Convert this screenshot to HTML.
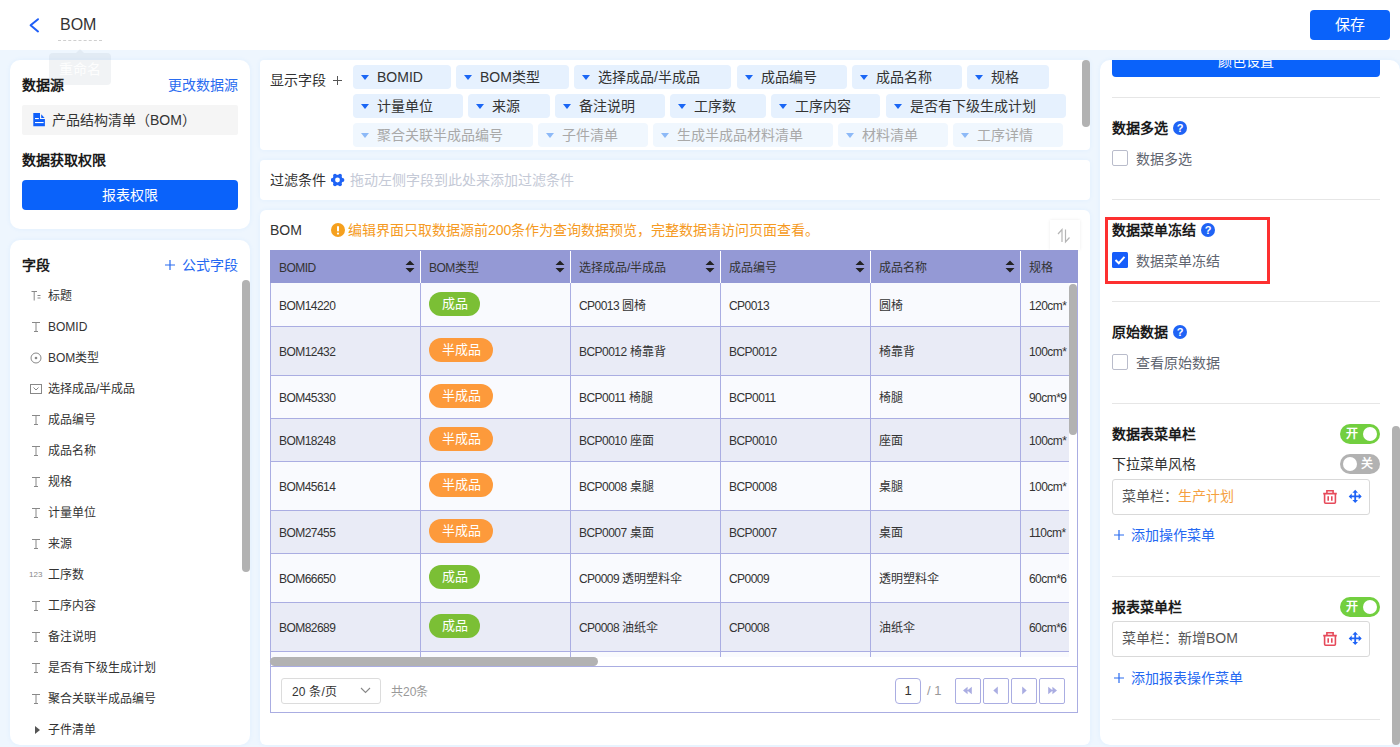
<!DOCTYPE html><html lang="zh-CN"><head><meta charset="utf-8"><style>
*{box-sizing:border-box;margin:0;padding:0}
html,body{width:1400px;height:747px;overflow:hidden}
body{font-family:"Liberation Sans",sans-serif;background:#eef6fe;color:#333;position:relative;font-size:14px}
.abs{position:absolute}
.panel{position:absolute;background:#fff;border-radius:10px;overflow:hidden;box-shadow:0 0 5px rgba(40,140,255,.07)}
.b{font-weight:bold;color:#1a1a1a}
.t{position:absolute;white-space:nowrap;line-height:20px}
.chip{position:absolute;height:24px;background:#e6f1fe;border-radius:4px;line-height:23px;white-space:nowrap;color:#333}
.chip i{position:absolute;left:8px;top:9.5px;width:0;height:0;border-left:4.5px solid transparent;border-right:4.5px solid transparent;border-top:5px solid #1a66f5}
.chip span{position:absolute;left:24px;top:1px}
.chip.f{background:#f0f7fe;color:#a9a9a9}
.chip.f i{border-top-color:#8db9f7}
.fl{position:absolute;left:48px;font-size:12px;line-height:16px;color:#333;white-space:nowrap}
.ic{position:absolute;left:30px}
.cell{position:absolute;font-size:12px;white-space:nowrap;color:#333}
.l{letter-spacing:-0.55px}
.tag{position:absolute;left:429px;height:24px;border-radius:12px;color:#fff;font-size:13px;font-weight:500;line-height:24px;text-align:center}
.g{background:#7bbf35;width:51px}
.o{background:#fd9a3b;width:64px}
.sep{position:absolute;left:1112px;width:268px;height:1px;background:#e6e6e6}
.q{position:absolute;width:14px;height:14px;border-radius:7px;background:#1f63f5;color:#fff;font-size:11px;font-weight:bold;line-height:14px;text-align:center}
.cb{position:absolute;left:1112px;width:16px;height:16px;border:1px solid #b9bccb;border-radius:2px;background:#fff}
.lbl{position:absolute;left:1136px;color:#5f6570;white-space:nowrap;line-height:20px;margin-top:1px}
.tg{position:absolute;left:1340px;width:40px;height:20px;border-radius:10px;color:#fff;font-size:12px;font-weight:bold;line-height:20px}
.tg b{position:absolute;top:3px;width:14px;height:14px;border-radius:7px;background:#fff}
.mbox{position:absolute;left:1112px;width:258px;height:36px;border:1px solid #d9d9d9;border-radius:3px}
.nb{position:absolute;top:678px;width:26px;height:26px;border:1px solid #aaade2;border-radius:2px;background:#fff}
</style></head><body>
<div class="abs" style="left:0;top:0;width:1400px;height:50px;background:#fff"></div>
<svg class="abs" style="left:28px;top:17px" width="13" height="17" viewBox="0 0 13 17"><path d="M10 2.2 L2.6 8.2 L10 14.4" fill="none" stroke="#1f5ef7" stroke-width="2" stroke-linecap="round" stroke-linejoin="round"/></svg>
<div class="t" style="left:60px;top:15px;font-size:16px;color:#333">BOM</div>
<div class="abs" style="left:58px;top:40px;width:44px;border-top:1px dashed #cfcfcf"></div>
<div class="abs" style="left:1310px;top:10px;width:80px;height:30px;background:#0a62fa;border-radius:4px;color:#fff;font-size:15px;line-height:30px;text-align:center">保存</div>
<div class="panel" style="left:10px;top:60px;width:240px;height:169px"></div>
<div class="t b" style="left:22px;top:75px">数据源</div>
<div class="t" style="left:168px;top:75px;color:#2a6cf0">更改数据源</div>
<div class="abs" style="left:22px;top:105px;width:216px;height:30px;background:#f5f5f5;border-radius:2px"></div>
<svg class="abs" style="left:33px;top:113px" width="12" height="14" viewBox="0 0 12 14"><path d="M0.3 0H7V6H11.9V13.2H0.3Z" fill="#1060fa"/><path d="M8.2 1.2L11.6 5H8.2Z" fill="#1060fa"/><rect x="2" y="5" width="3.8" height="1.1" fill="#fff"/><rect x="2" y="9" width="8.6" height="1.1" fill="#fff"/></svg>
<div class="t" style="left:52px;top:110px;color:#333">产品结构清单（BOM）</div>
<div class="t b" style="left:22px;top:150px">数据获取权限</div>
<div class="abs" style="left:22px;top:180px;width:216px;height:30px;background:#0a62fa;border-radius:4px;color:#fff;line-height:30px;text-align:center">报表权限</div>
<div class="abs" style="left:49px;top:53px;width:62px;height:32px;background:rgba(150,160,175,.13);border-radius:4px;color:rgba(255,255,255,.9);font-size:14px;line-height:32px;text-align:center">重命名</div>
<div class="abs" style="left:76px;top:49px;width:0;height:0;border-left:4px solid transparent;border-right:4px solid transparent;border-bottom:4px solid rgba(150,160,175,.13)"></div>
<div class="panel" style="left:10px;top:240px;width:240px;height:505px"></div>
<div class="t b" style="left:22px;top:255px">字段</div>
<svg class="abs" style="left:165px;top:260px" width="10" height="10" viewBox="0 0 10 10"><path d="M0 5H10M5 0V10" stroke="#2a6cf0" stroke-width="1.2"/></svg>
<div class="t" style="left:182px;top:255px;color:#2468f2">公式字段</div>
<div class="abs" style="left:242px;top:280px;width:8px;height:292px;background:#b2b2b2;border-radius:4px"></div>
<div class="fl" style="top:288px">标题</div>
<svg class="ic" style="top:290px" width="12" height="12" viewBox="0 0 12 12"><path d="M1.5 1.5H7M4.2 1.5V10.5M7.5 5.5H10.5M7.5 8H10.5" stroke="#888" stroke-width="1" fill="none"/></svg>
<div class="fl" style="top:319px">BOMID</div>
<svg class="ic" style="top:321px" width="12" height="12" viewBox="0 0 12 12"><path d="M2 1.5H10M6 1.5V10.5M4 10.5H8" stroke="#888" stroke-width="1" fill="none"/></svg>
<div class="fl" style="top:350px">BOM类型</div>
<svg class="ic" style="top:352px" width="12" height="12" viewBox="0 0 12 12"><circle cx="6" cy="6" r="5" stroke="#888" stroke-width="1" fill="none"/><circle cx="6" cy="6" r="1.3" fill="#888"/></svg>
<div class="fl" style="top:381px">选择成品/半成品</div>
<svg class="ic" style="top:383px" width="12" height="12" viewBox="0 0 12 12"><rect x="0.5" y="1.5" width="11" height="9" stroke="#888" stroke-width="1" fill="none"/><path d="M3.5 4.5L6 7L8.5 4.5" stroke="#888" stroke-width="1" fill="none"/></svg>
<div class="fl" style="top:412px">成品编号</div>
<svg class="ic" style="top:414px" width="12" height="12" viewBox="0 0 12 12"><path d="M2 1.5H10M6 1.5V10.5M4 10.5H8" stroke="#888" stroke-width="1" fill="none"/></svg>
<div class="fl" style="top:443px">成品名称</div>
<svg class="ic" style="top:445px" width="12" height="12" viewBox="0 0 12 12"><path d="M2 1.5H10M6 1.5V10.5M4 10.5H8" stroke="#888" stroke-width="1" fill="none"/></svg>
<div class="fl" style="top:474px">规格</div>
<svg class="ic" style="top:476px" width="12" height="12" viewBox="0 0 12 12"><path d="M2 1.5H10M6 1.5V10.5M4 10.5H8" stroke="#888" stroke-width="1" fill="none"/></svg>
<div class="fl" style="top:505px">计量单位</div>
<svg class="ic" style="top:507px" width="12" height="12" viewBox="0 0 12 12"><path d="M2 1.5H10M6 1.5V10.5M4 10.5H8" stroke="#888" stroke-width="1" fill="none"/></svg>
<div class="fl" style="top:536px">来源</div>
<svg class="ic" style="top:538px" width="12" height="12" viewBox="0 0 12 12"><path d="M2 1.5H10M6 1.5V10.5M4 10.5H8" stroke="#888" stroke-width="1" fill="none"/></svg>
<div class="fl" style="top:567px">工序数</div>
<div class="abs" style="left:29px;top:570px;font-size:8px;line-height:10px;color:#888">123</div>
<div class="fl" style="top:598px">工序内容</div>
<svg class="ic" style="top:600px" width="12" height="12" viewBox="0 0 12 12"><path d="M2 1.5H10M6 1.5V10.5M4 10.5H8" stroke="#888" stroke-width="1" fill="none"/></svg>
<div class="fl" style="top:629px">备注说明</div>
<svg class="ic" style="top:631px" width="12" height="12" viewBox="0 0 12 12"><path d="M2 1.5H10M6 1.5V10.5M4 10.5H8" stroke="#888" stroke-width="1" fill="none"/></svg>
<div class="fl" style="top:660px">是否有下级生成计划</div>
<svg class="ic" style="top:662px" width="12" height="12" viewBox="0 0 12 12"><path d="M2 1.5H10M6 1.5V10.5M4 10.5H8" stroke="#888" stroke-width="1" fill="none"/></svg>
<div class="fl" style="top:691px">聚合关联半成品编号</div>
<svg class="ic" style="top:693px" width="12" height="12" viewBox="0 0 12 12"><path d="M2 1.5H10M6 1.5V10.5M4 10.5H8" stroke="#888" stroke-width="1" fill="none"/></svg>
<div class="fl" style="top:722px">子件清单</div>
<div class="abs" style="left:35px;top:726px;width:0;height:0;border-top:4px solid transparent;border-bottom:4px solid transparent;border-left:5px solid #555"></div>
<div class="panel" style="left:260px;top:60px;width:830px;height:90px;border-radius:4px"></div>
<div class="t" style="left:270px;top:70px">显示字段</div>
<svg class="abs" style="left:333px;top:76px" width="9" height="9" viewBox="0 0 9 9"><path d="M0 4.5H9M4.5 0V9" stroke="#555" stroke-width="1"/></svg>
<div class="abs" style="left:1082px;top:60px;width:8px;height:67px;background:#b2b2b2;border-radius:4px"></div>
<div class="chip" style="left:353px;top:65px;width:98px"><i></i><span>BOMID</span></div>
<div class="chip" style="left:456px;top:65px;width:113px"><i></i><span>BOM类型</span></div>
<div class="chip" style="left:574px;top:65px;width:157px"><i></i><span>选择成品/半成品</span></div>
<div class="chip" style="left:737px;top:65px;width:110px"><i></i><span>成品编号</span></div>
<div class="chip" style="left:852px;top:65px;width:110px"><i></i><span>成品名称</span></div>
<div class="chip" style="left:967px;top:65px;width:82px"><i></i><span>规格</span></div>
<div class="chip" style="left:353px;top:94px;width:110px"><i></i><span>计量单位</span></div>
<div class="chip" style="left:468px;top:94px;width:82px"><i></i><span>来源</span></div>
<div class="chip" style="left:555px;top:94px;width:110px"><i></i><span>备注说明</span></div>
<div class="chip" style="left:670px;top:94px;width:96px"><i></i><span>工序数</span></div>
<div class="chip" style="left:771px;top:94px;width:109px"><i></i><span>工序内容</span></div>
<div class="chip" style="left:886px;top:94px;width:180px"><i></i><span>是否有下级生成计划</span></div>
<div class="chip f" style="left:353px;top:123px;width:180px"><i></i><span>聚合关联半成品编号</span></div>
<div class="chip f" style="left:538px;top:123px;width:110px"><i></i><span>子件清单</span></div>
<div class="chip f" style="left:653px;top:123px;width:180px"><i></i><span>生成半成品材料清单</span></div>
<div class="chip f" style="left:838px;top:123px;width:110px"><i></i><span>材料清单</span></div>
<div class="chip f" style="left:953px;top:123px;width:110px"><i></i><span>工序详情</span></div>
<div class="panel" style="left:260px;top:160px;width:830px;height:40px;border-radius:4px"></div>
<div class="t" style="left:270px;top:170px">过滤条件</div>
<svg class="abs" style="left:331px;top:173px" width="14" height="14" viewBox="0 0 14 14"><circle cx="6.5" cy="7" r="5.2" fill="#1f63f5"/><circle cx="11.50" cy="7.00" r="1.9" fill="#1f63f5"/><circle cx="9.00" cy="11.33" r="1.9" fill="#1f63f5"/><circle cx="4.00" cy="11.33" r="1.9" fill="#1f63f5"/><circle cx="1.50" cy="7.00" r="1.9" fill="#1f63f5"/><circle cx="4.00" cy="2.67" r="1.9" fill="#1f63f5"/><circle cx="9.00" cy="2.67" r="1.9" fill="#1f63f5"/><circle cx="6.5" cy="7" r="2.4" fill="#fff"/></svg>
<div class="t" style="left:350px;top:170px;color:#c4c9d6">拖动左侧字段到此处来添加过滤条件</div>
<div class="panel" style="left:260px;top:210px;width:830px;height:535px;border-radius:6px"></div>
<div class="t" style="left:270px;top:220px">BOM</div>
<svg class="abs" style="left:331px;top:223px" width="14" height="14" viewBox="0 0 14 14"><circle cx="7" cy="7" r="7" fill="#f5a01e"/><rect x="6" y="3" width="2" height="5.5" rx="1" fill="#fff"/><circle cx="7" cy="10.6" r="1.1" fill="#fff"/></svg>
<div class="t" style="left:348px;top:220px;color:#f59a23;font-size:14px">编辑界面只取数据源前200条作为查询数据预览，完整数据请访问页面查看。</div>
<div class="abs" style="left:1050px;top:220px;width:30px;height:30px;background:#fff;box-shadow:0 0 3px rgba(0,0,0,.08)"><svg class="abs" style="left:0;top:0" width="30" height="30" viewBox="0 0 30 30"><path d="M12 22V9.5L8 14M15.5 9.5V22L19.5 17.5" stroke="#b5b5b5" stroke-width="1.2" fill="none"/></svg></div>
<div class="abs" style="left:270px;top:250px;width:808px;height:463px;border:1px solid #aaade2;border-top:none"></div>
<div class="abs" style="left:270px;top:250px;width:808px;height:33px;background:#9499d5"></div>
<div class="cell" style="left:279px;top:259px;line-height:18px"><span class="l">BOMID</span></div>
<div class="abs" style="left:420px;top:251px;width:1px;height:32px;background:#fff"></div>
<svg class="abs" style="left:405px;top:260px" width="10" height="13" viewBox="0 0 10 13"><path d="M5 0.5L9.5 5H0.5Z M5 12.5L9.5 8H0.5Z" fill="#222"/></svg>
<div class="cell" style="left:429px;top:259px;line-height:18px"><span class="l">BOM</span>类型</div>
<div class="abs" style="left:570px;top:251px;width:1px;height:32px;background:#fff"></div>
<svg class="abs" style="left:555px;top:260px" width="10" height="13" viewBox="0 0 10 13"><path d="M5 0.5L9.5 5H0.5Z M5 12.5L9.5 8H0.5Z" fill="#222"/></svg>
<div class="cell" style="left:579px;top:259px;line-height:18px">选择成品/半成品</div>
<div class="abs" style="left:720px;top:251px;width:1px;height:32px;background:#fff"></div>
<svg class="abs" style="left:705px;top:260px" width="10" height="13" viewBox="0 0 10 13"><path d="M5 0.5L9.5 5H0.5Z M5 12.5L9.5 8H0.5Z" fill="#222"/></svg>
<div class="cell" style="left:729px;top:259px;line-height:18px">成品编号</div>
<div class="abs" style="left:870px;top:251px;width:1px;height:32px;background:#fff"></div>
<svg class="abs" style="left:855px;top:260px" width="10" height="13" viewBox="0 0 10 13"><path d="M5 0.5L9.5 5H0.5Z M5 12.5L9.5 8H0.5Z" fill="#222"/></svg>
<div class="cell" style="left:879px;top:259px;line-height:18px">成品名称</div>
<div class="abs" style="left:1020px;top:251px;width:1px;height:32px;background:#fff"></div>
<svg class="abs" style="left:1005px;top:260px" width="10" height="13" viewBox="0 0 10 13"><path d="M5 0.5L9.5 5H0.5Z M5 12.5L9.5 8H0.5Z" fill="#222"/></svg>
<div class="cell" style="left:1029px;top:259px;line-height:18px">规格</div>
<div class="abs" style="left:271px;top:283px;width:798px;height:374px;overflow:hidden">
<div class="abs" style="left:0;top:0px;width:798px;height:43px;background:#f9fafe"></div>
<div class="abs" style="left:0;top:43px;width:798px;height:1px;background:#aaade2"></div>
<div class="cell" style="left:8px;top:13.5px;line-height:18px"><span class="l">BOM14220</span></div>
<div class="abs" style="left:149px;top:0px;width:1px;height:43px;background:#aaade2"></div>
<div class="tag g" style="left:158px;top:9px">成品</div>
<div class="abs" style="left:299px;top:0px;width:1px;height:43px;background:#aaade2"></div>
<div class="cell" style="left:308px;top:13.5px;line-height:18px"><span class="l">CP0013</span> 圆椅</div>
<div class="abs" style="left:449px;top:0px;width:1px;height:43px;background:#aaade2"></div>
<div class="cell" style="left:458px;top:13.5px;line-height:18px"><span class="l">CP0013</span></div>
<div class="abs" style="left:599px;top:0px;width:1px;height:43px;background:#aaade2"></div>
<div class="cell" style="left:608px;top:13.5px;line-height:18px">圆椅</div>
<div class="abs" style="left:749px;top:0px;width:1px;height:43px;background:#aaade2"></div>
<div class="cell" style="left:758px;top:13.5px;line-height:18px"><span class="l">120cm*</span></div>
<div class="abs" style="left:0;top:44px;width:798px;height:48px;background:#e9ebf6"></div>
<div class="abs" style="left:0;top:92px;width:798px;height:1px;background:#aaade2"></div>
<div class="cell" style="left:8px;top:59.5px;line-height:18px"><span class="l">BOM12432</span></div>
<div class="abs" style="left:149px;top:43px;width:1px;height:49px;background:#aaade2"></div>
<div class="tag o" style="left:158px;top:55px">半成品</div>
<div class="abs" style="left:299px;top:43px;width:1px;height:49px;background:#aaade2"></div>
<div class="cell" style="left:308px;top:59.5px;line-height:18px"><span class="l">BCP0012</span> 椅靠背</div>
<div class="abs" style="left:449px;top:43px;width:1px;height:49px;background:#aaade2"></div>
<div class="cell" style="left:458px;top:59.5px;line-height:18px"><span class="l">BCP0012</span></div>
<div class="abs" style="left:599px;top:43px;width:1px;height:49px;background:#aaade2"></div>
<div class="cell" style="left:608px;top:59.5px;line-height:18px">椅靠背</div>
<div class="abs" style="left:749px;top:43px;width:1px;height:49px;background:#aaade2"></div>
<div class="cell" style="left:758px;top:59.5px;line-height:18px"><span class="l">100cm*</span></div>
<div class="abs" style="left:0;top:93px;width:798px;height:42px;background:#f9fafe"></div>
<div class="abs" style="left:0;top:135px;width:798px;height:1px;background:#aaade2"></div>
<div class="cell" style="left:8px;top:105.5px;line-height:18px"><span class="l">BOM45330</span></div>
<div class="abs" style="left:149px;top:92px;width:1px;height:43px;background:#aaade2"></div>
<div class="tag o" style="left:158px;top:101px">半成品</div>
<div class="abs" style="left:299px;top:92px;width:1px;height:43px;background:#aaade2"></div>
<div class="cell" style="left:308px;top:105.5px;line-height:18px"><span class="l">BCP0011</span> 椅腿</div>
<div class="abs" style="left:449px;top:92px;width:1px;height:43px;background:#aaade2"></div>
<div class="cell" style="left:458px;top:105.5px;line-height:18px"><span class="l">BCP0011</span></div>
<div class="abs" style="left:599px;top:92px;width:1px;height:43px;background:#aaade2"></div>
<div class="cell" style="left:608px;top:105.5px;line-height:18px">椅腿</div>
<div class="abs" style="left:749px;top:92px;width:1px;height:43px;background:#aaade2"></div>
<div class="cell" style="left:758px;top:105.5px;line-height:18px"><span class="l">90cm*9</span></div>
<div class="abs" style="left:0;top:136px;width:798px;height:42px;background:#e9ebf6"></div>
<div class="abs" style="left:0;top:178px;width:798px;height:1px;background:#aaade2"></div>
<div class="cell" style="left:8px;top:148.5px;line-height:18px"><span class="l">BOM18248</span></div>
<div class="abs" style="left:149px;top:135px;width:1px;height:43px;background:#aaade2"></div>
<div class="tag o" style="left:158px;top:144px">半成品</div>
<div class="abs" style="left:299px;top:135px;width:1px;height:43px;background:#aaade2"></div>
<div class="cell" style="left:308px;top:148.5px;line-height:18px"><span class="l">BCP0010</span> 座面</div>
<div class="abs" style="left:449px;top:135px;width:1px;height:43px;background:#aaade2"></div>
<div class="cell" style="left:458px;top:148.5px;line-height:18px"><span class="l">BCP0010</span></div>
<div class="abs" style="left:599px;top:135px;width:1px;height:43px;background:#aaade2"></div>
<div class="cell" style="left:608px;top:148.5px;line-height:18px">座面</div>
<div class="abs" style="left:749px;top:135px;width:1px;height:43px;background:#aaade2"></div>
<div class="cell" style="left:758px;top:148.5px;line-height:18px"><span class="l">100cm*</span></div>
<div class="abs" style="left:0;top:179px;width:798px;height:48px;background:#f9fafe"></div>
<div class="abs" style="left:0;top:227px;width:798px;height:1px;background:#aaade2"></div>
<div class="cell" style="left:8px;top:194.5px;line-height:18px"><span class="l">BOM45614</span></div>
<div class="abs" style="left:149px;top:178px;width:1px;height:49px;background:#aaade2"></div>
<div class="tag o" style="left:158px;top:190px">半成品</div>
<div class="abs" style="left:299px;top:178px;width:1px;height:49px;background:#aaade2"></div>
<div class="cell" style="left:308px;top:194.5px;line-height:18px"><span class="l">BCP0008</span> 桌腿</div>
<div class="abs" style="left:449px;top:178px;width:1px;height:49px;background:#aaade2"></div>
<div class="cell" style="left:458px;top:194.5px;line-height:18px"><span class="l">BCP0008</span></div>
<div class="abs" style="left:599px;top:178px;width:1px;height:49px;background:#aaade2"></div>
<div class="cell" style="left:608px;top:194.5px;line-height:18px">桌腿</div>
<div class="abs" style="left:749px;top:178px;width:1px;height:49px;background:#aaade2"></div>
<div class="cell" style="left:758px;top:194.5px;line-height:18px"><span class="l">100cm*</span></div>
<div class="abs" style="left:0;top:228px;width:798px;height:42px;background:#e9ebf6"></div>
<div class="abs" style="left:0;top:270px;width:798px;height:1px;background:#aaade2"></div>
<div class="cell" style="left:8px;top:240.5px;line-height:18px"><span class="l">BOM27455</span></div>
<div class="abs" style="left:149px;top:227px;width:1px;height:43px;background:#aaade2"></div>
<div class="tag o" style="left:158px;top:236px">半成品</div>
<div class="abs" style="left:299px;top:227px;width:1px;height:43px;background:#aaade2"></div>
<div class="cell" style="left:308px;top:240.5px;line-height:18px"><span class="l">BCP0007</span> 桌面</div>
<div class="abs" style="left:449px;top:227px;width:1px;height:43px;background:#aaade2"></div>
<div class="cell" style="left:458px;top:240.5px;line-height:18px"><span class="l">BCP0007</span></div>
<div class="abs" style="left:599px;top:227px;width:1px;height:43px;background:#aaade2"></div>
<div class="cell" style="left:608px;top:240.5px;line-height:18px">桌面</div>
<div class="abs" style="left:749px;top:227px;width:1px;height:43px;background:#aaade2"></div>
<div class="cell" style="left:758px;top:240.5px;line-height:18px"><span class="l">110cm*</span></div>
<div class="abs" style="left:0;top:271px;width:798px;height:48px;background:#f9fafe"></div>
<div class="abs" style="left:0;top:319px;width:798px;height:1px;background:#aaade2"></div>
<div class="cell" style="left:8px;top:286.5px;line-height:18px"><span class="l">BOM66650</span></div>
<div class="abs" style="left:149px;top:270px;width:1px;height:49px;background:#aaade2"></div>
<div class="tag g" style="left:158px;top:282px">成品</div>
<div class="abs" style="left:299px;top:270px;width:1px;height:49px;background:#aaade2"></div>
<div class="cell" style="left:308px;top:286.5px;line-height:18px"><span class="l">CP0009</span> 透明塑料伞</div>
<div class="abs" style="left:449px;top:270px;width:1px;height:49px;background:#aaade2"></div>
<div class="cell" style="left:458px;top:286.5px;line-height:18px"><span class="l">CP0009</span></div>
<div class="abs" style="left:599px;top:270px;width:1px;height:49px;background:#aaade2"></div>
<div class="cell" style="left:608px;top:286.5px;line-height:18px">透明塑料伞</div>
<div class="abs" style="left:749px;top:270px;width:1px;height:49px;background:#aaade2"></div>
<div class="cell" style="left:758px;top:286.5px;line-height:18px"><span class="l">60cm*6</span></div>
<div class="abs" style="left:0;top:320px;width:798px;height:48px;background:#e9ebf6"></div>
<div class="abs" style="left:0;top:368px;width:798px;height:1px;background:#aaade2"></div>
<div class="cell" style="left:8px;top:335.5px;line-height:18px"><span class="l">BOM82689</span></div>
<div class="abs" style="left:149px;top:319px;width:1px;height:49px;background:#aaade2"></div>
<div class="tag g" style="left:158px;top:331px">成品</div>
<div class="abs" style="left:299px;top:319px;width:1px;height:49px;background:#aaade2"></div>
<div class="cell" style="left:308px;top:335.5px;line-height:18px"><span class="l">CP0008</span> 油纸伞</div>
<div class="abs" style="left:449px;top:319px;width:1px;height:49px;background:#aaade2"></div>
<div class="cell" style="left:458px;top:335.5px;line-height:18px"><span class="l">CP0008</span></div>
<div class="abs" style="left:599px;top:319px;width:1px;height:49px;background:#aaade2"></div>
<div class="cell" style="left:608px;top:335.5px;line-height:18px">油纸伞</div>
<div class="abs" style="left:749px;top:319px;width:1px;height:49px;background:#aaade2"></div>
<div class="cell" style="left:758px;top:335.5px;line-height:18px"><span class="l">60cm*6</span></div>
<div class="abs" style="left:0;top:369px;width:798px;height:48px;background:#f9fafe"></div>
<div class="abs" style="left:0;top:417px;width:798px;height:1px;background:#aaade2"></div>
<div class="abs" style="left:149px;top:368px;width:1px;height:49px;background:#aaade2"></div>
<div class="abs" style="left:299px;top:368px;width:1px;height:49px;background:#aaade2"></div>
<div class="abs" style="left:449px;top:368px;width:1px;height:49px;background:#aaade2"></div>
<div class="abs" style="left:599px;top:368px;width:1px;height:49px;background:#aaade2"></div>
<div class="abs" style="left:749px;top:368px;width:1px;height:49px;background:#aaade2"></div>
</div>
<div class="abs" style="left:1069px;top:283px;width:8px;height:383px;background:#fff"></div>
<div class="abs" style="left:1069px;top:284px;width:8px;height:151px;background:#b2b2b2;border-radius:4px"></div>
<div class="abs" style="left:271px;top:657px;width:798px;height:9px;background:#fff"></div>
<div class="abs" style="left:270px;top:657px;width:328px;height:9px;background:#b2b2b2;border-radius:4.5px"></div>
<div class="abs" style="left:270px;top:666px;width:808px;height:1px;background:#aaade2"></div>
<div class="abs" style="left:281px;top:678px;width:100px;height:26px;border:1px solid #dcdcdc;border-radius:3px;background:#fff"></div>
<div class="cell" style="left:292px;top:684px;font-size:12px;line-height:17px;letter-spacing:0.2px">20 条/页</div>
<svg class="abs" style="left:360px;top:687px" width="11" height="7" viewBox="0 0 11 7"><path d="M1 1L5.5 5.5L10 1" stroke="#888" stroke-width="1.1" fill="none"/></svg>
<div class="cell" style="left:391px;top:684px;font-size:12px;line-height:17px;color:#999">共20条</div>
<div class="abs" style="left:895px;top:678px;width:26px;height:26px;border:1px solid #aaade2;border-radius:4px;background:#fff;font-size:13px;line-height:24px;text-align:center;color:#333">1</div>
<div class="cell" style="left:927px;top:682px;font-size:13px;line-height:17px;color:#999">/ 1</div>
<div class="nb" style="left:955px"><svg class="abs" style="left:4px;top:4px" width="16" height="16" viewBox="0 0 16 16"><path d="M7.2 7.5L11.8 3.8V11.2Z M3 7.5L7.6 3.8V11.2Z" fill="#aaade2"/></svg></div>
<div class="nb" style="left:983px"><svg class="abs" style="left:4px;top:4px" width="16" height="16" viewBox="0 0 16 16"><path d="M5.3 7.5L9.8 3.6V11.4Z" fill="#aaade2"/></svg></div>
<div class="nb" style="left:1011px"><svg class="abs" style="left:4px;top:4px" width="16" height="16" viewBox="0 0 16 16"><path d="M10.7 7.5L6.2 3.6V11.4Z" fill="#aaade2"/></svg></div>
<div class="nb" style="left:1039px"><svg class="abs" style="left:4px;top:4px" width="16" height="16" viewBox="0 0 16 16"><path d="M8.8 7.5L4.2 3.8V11.2Z M13 7.5L8.4 3.8V11.2Z" fill="#aaade2"/></svg></div>
<div class="panel" style="left:1100px;top:60px;width:300px;height:685px">
<div class="abs" style="left:12px;top:-13px;width:268px;height:30px;background:#0a62fa;border-radius:4px;color:#fff;line-height:28px;text-align:center">颜色设置</div>
</div>
<div class="sep" style="top:97px"></div>
<div class="sep" style="top:199px"></div>
<div class="sep" style="top:301px"></div>
<div class="sep" style="top:403px"></div>
<div class="sep" style="top:576px"></div>
<div class="sep" style="top:719px"></div>
<div class="t b" style="left:1112px;top:118px">数据多选</div>
<div class="q" style="left:1173px;top:121px">?</div>
<div class="cb" style="top:150px"></div>
<div class="lbl" style="top:148px">数据多选</div>
<div class="t b" style="left:1112px;top:220px">数据菜单冻结</div>
<div class="q" style="left:1201px;top:223px">?</div>
<div class="abs" style="left:1112px;top:252px;width:16px;height:16px;background:#165dfa;border-radius:1.5px"><svg class="abs" style="left:0;top:0" width="16" height="16" viewBox="0 0 16 16"><path d="M3.5 8L6.8 11.2L12.5 4.8" stroke="#fff" stroke-width="2" fill="none"/></svg></div>
<div class="lbl" style="top:250px">数据菜单冻结</div>
<div class="abs" style="left:1105px;top:217px;width:165px;height:67px;border:3px solid #fd3030"></div>
<div class="t b" style="left:1112px;top:322px">原始数据</div>
<div class="q" style="left:1173px;top:325px">?</div>
<div class="cb" style="top:354px"></div>
<div class="lbl" style="top:352px">查看原始数据</div>
<div class="t b" style="left:1112px;top:424px">数据表菜单栏</div>
<div class="tg" style="top:424px;background:#72cf3f"><span style="position:absolute;left:6px;top:0">开</span><b style="left:23px"></b></div>
<div class="t" style="left:1112px;top:454px">下拉菜单风格</div>
<div class="tg" style="top:454px;background:#b2b2b2"><b style="left:3px"></b><span style="position:absolute;left:21px;top:0">关</span></div>
<div class="mbox" style="top:479px"></div>
<div class="t" style="left:1122px;top:486px;color:#555">菜单栏：<span style="color:#f5a040">生产计划</span></div>
<svg class="abs" style="left:1322px;top:489px" width="16" height="16" viewBox="0 0 16 16"><path d="M4.9 4.6V1.8H11.1V4.6M1.2 4.6H14.8M2.6 4.6V13.2Q2.6 14.2 3.6 14.2H12.4Q13.4 14.2 13.4 13.2V4.6M6.2 7.3V11.7M9.8 7.3V11.7" stroke="#e64a5a" stroke-width="1.6" fill="none"/></svg>
<svg class="abs" style="left:1348px;top:489px" width="15" height="15" viewBox="0 0 15 15"><path d="M7.2 2V12.8M2 7.4H12.4" stroke="#1f63f5" stroke-width="1.8"/><path d="M7.2 0.8L10 3.8H4.4Z M7.2 14L10 11H4.4Z M0.7 7.4L3.7 4.6V10.2Z M13.7 7.4L10.7 4.6V10.2Z" fill="#1f63f5"/></svg>
<svg class="abs" style="left:1114px;top:530px" width="10" height="10" viewBox="0 0 10 10"><path d="M0 5H10M5 0V10" stroke="#2a6cf0" stroke-width="1.2"/></svg>
<div class="t" style="left:1131px;top:525px;color:#2468f2">添加操作菜单</div>
<div class="t b" style="left:1112px;top:597px">报表菜单栏</div>
<div class="tg" style="top:597px;background:#72cf3f"><span style="position:absolute;left:6px;top:0">开</span><b style="left:23px"></b></div>
<div class="mbox" style="top:621px"></div>
<div class="t" style="left:1122px;top:628px;color:#555">菜单栏：新增BOM</div>
<svg class="abs" style="left:1322px;top:631px" width="16" height="16" viewBox="0 0 16 16"><path d="M4.9 4.6V1.8H11.1V4.6M1.2 4.6H14.8M2.6 4.6V13.2Q2.6 14.2 3.6 14.2H12.4Q13.4 14.2 13.4 13.2V4.6M6.2 7.3V11.7M9.8 7.3V11.7" stroke="#e64a5a" stroke-width="1.6" fill="none"/></svg>
<svg class="abs" style="left:1348px;top:631px" width="15" height="15" viewBox="0 0 15 15"><path d="M7.2 2V12.8M2 7.4H12.4" stroke="#1f63f5" stroke-width="1.8"/><path d="M7.2 0.8L10 3.8H4.4Z M7.2 14L10 11H4.4Z M0.7 7.4L3.7 4.6V10.2Z M13.7 7.4L10.7 4.6V10.2Z" fill="#1f63f5"/></svg>
<svg class="abs" style="left:1114px;top:673px" width="10" height="10" viewBox="0 0 10 10"><path d="M0 5H10M5 0V10" stroke="#2a6cf0" stroke-width="1.2"/></svg>
<div class="t" style="left:1131px;top:668px;color:#2468f2">添加报表操作菜单</div>
<div class="abs" style="left:1392px;top:426px;width:8px;height:319px;background:#b2b2b2;border-radius:4px"></div>
</body></html>
